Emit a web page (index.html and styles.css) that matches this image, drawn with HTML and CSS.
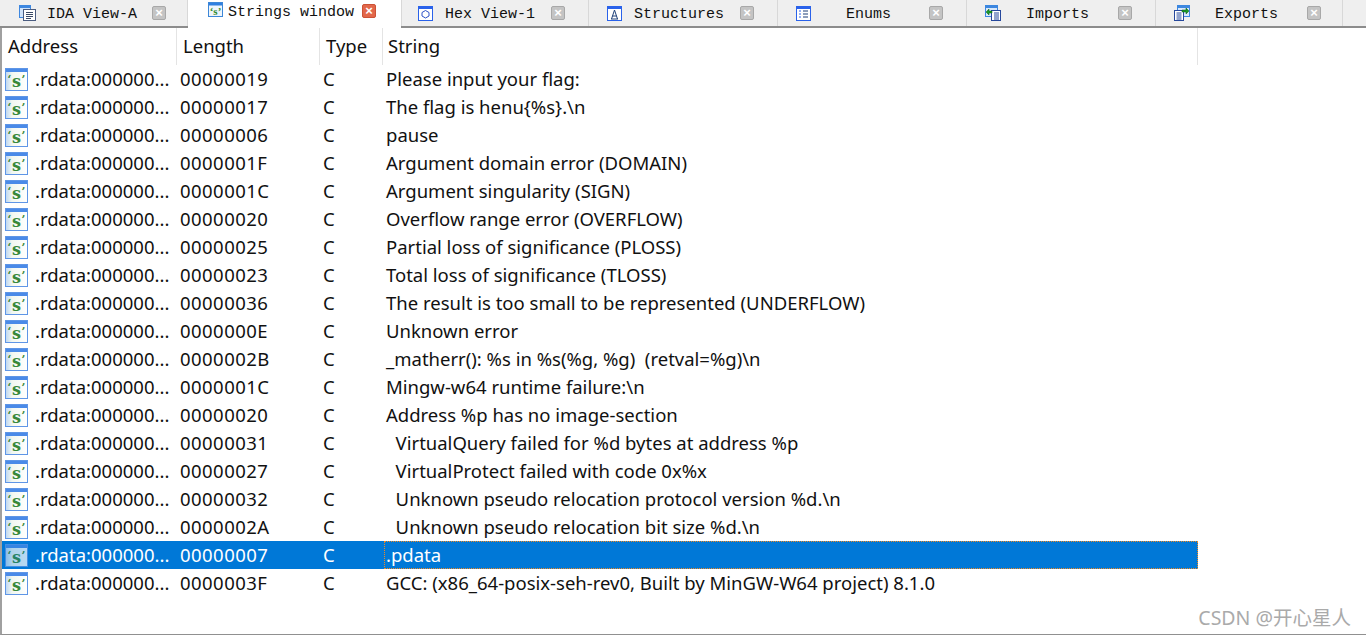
FILE: index.html
```html
<!DOCTYPE html>
<html lang="en">
<head>
<meta charset="utf-8">
<title>Strings window</title>
<link rel="stylesheet" href="styles.css">
</head>
<body>
<svg class="defs" width="0" height="0" aria-hidden="true">
  <defs>
    <linearGradient id="g-str" x1="0" y1="0" x2="1" y2="0">
      <stop offset="0" stop-color="#bcd6f2"/>
      <stop offset="0.3" stop-color="#f2f7f0"/>
      <stop offset="1" stop-color="#ffffff"/>
    </linearGradient>
    <symbol id="i-str" viewBox="0 0 23 23">
      <rect x="0.5" y="0.5" width="22" height="22" fill="url(#g-str)" stroke="#5f96e6"/>
      <rect x="1" y="1" width="21" height="3" fill="#4a8ae8"/>
      <text x="11.5" y="19" class="glyph" text-anchor="middle">s</text>
      <text x="4.5" y="15" class="glyph-q" text-anchor="middle">‘</text>
      <text x="18.5" y="15" class="glyph-q" text-anchor="middle">’</text>
    </symbol>
    <symbol id="i-strsm" viewBox="0 0 15 15">
      <rect x="0.5" y="0.5" width="14" height="14" fill="#eef5fb" stroke="#3d87d8"/>
      <rect x="1" y="1" width="13" height="2.5" fill="#2f7fe0"/>
      <text x="7.5" y="12.5" class="glyph-sm" text-anchor="middle">‘s’</text>
    </symbol>
    <symbol id="i-ida" viewBox="0 0 17 16">
      <rect x="0.5" y="0.5" width="11" height="12" fill="#cfe3fa" stroke="#3d87e0"/>
      <rect x="1" y="0.5" width="10" height="2.5" fill="#3d87e0"/>
      <rect x="4.5" y="4.5" width="12" height="11" fill="#fff" stroke="#4a5c80"/>
      <path d="M7 7.5h7M7 9.5h7M7 11.5h7M7 13.5h5" stroke="#3b4a66" fill="none"/>
    </symbol>
    <symbol id="i-hex" viewBox="0 0 15 15">
      <rect x="0.5" y="0.5" width="14" height="14" fill="#fff" stroke="#2a62ea"/>
      <rect x="1" y="1" width="13" height="2" fill="#2a62ea"/>
      <path d="M7.5 4.5l3.5 2v3.5l-3.5 2-3.5-2v-3.5z" fill="#fff" stroke="#2c50c8"/>
    </symbol>
    <symbol id="i-struct" viewBox="0 0 15 15">
      <rect x="0.5" y="0.5" width="14" height="14" fill="#fff" stroke="#2a62ea"/>
      <rect x="1" y="1" width="13" height="2" fill="#2a62ea"/>
      <path d="M7.5 4L4.5 13M7.5 4l3 9M5.5 10h4M4 13h7" stroke="#1c3f78" fill="none"/>
    </symbol>
    <symbol id="i-enum" viewBox="0 0 15 15">
      <rect x="0.5" y="0.5" width="14" height="14" fill="#fff" stroke="#2a62ea"/>
      <rect x="1" y="1" width="13" height="2" fill="#2a62ea"/>
      <path d="M3 5h2M3 8h2M3 11h2" stroke="#2a62ea" fill="none"/>
      <path d="M7 5h5M7 8h5M7 11h5" stroke="#1c3f78" fill="none"/>
    </symbol>
    <symbol id="i-imp" viewBox="0 0 16 16">
      <rect x="0.5" y="0.5" width="12" height="11" fill="#d8e8fb" stroke="#3d87e0"/>
      <rect x="1" y="0.5" width="11" height="2.5" fill="#3d87e0"/>
      <rect x="6.5" y="5.5" width="9" height="10" fill="#fff" stroke="#26489c"/>
      <path d="M9 8h5M9 10h5M9 12h5M9 14h5" stroke="#26489c" fill="none"/>
      <path d="M1 7l3-3v2h3v2H4v2z" fill="#1c9a28" stroke="#0b5a14" stroke-width="0.5"/>
    </symbol>
    <symbol id="i-exp" viewBox="0 0 16 16">
      <rect x="3.5" y="0.5" width="12" height="11" fill="#d8e8fb" stroke="#3d87e0"/>
      <rect x="4" y="0.5" width="11" height="2.5" fill="#3d87e0"/>
      <rect x="0.5" y="5.5" width="9" height="10" fill="#fff" stroke="#26489c"/>
      <path d="M2.5 8h5M2.5 10h5M2.5 12h5M2.5 14h5" stroke="#26489c" fill="none"/>
      <path d="M15 6l-3-3v2H8v2h4v2z" fill="#1c9a28" stroke="#0b5a14" stroke-width="0.5"/>
    </symbol>
  </defs>
</svg>

<div class="app">
  <nav class="tabs">
    <div class="tab tab-first">
      <svg class="tab-icon icon-ida"><use href="#i-ida"/></svg>
      <span class="tab-label label-near">IDA View-A</span>
      <span class="tab-close">×</span>
    </div>
    <div class="tab tab-active">
      <svg class="tab-icon icon-active"><use href="#i-strsm"/></svg>
      <span class="tab-label label-active">Strings window</span>
      <span class="tab-close close-active">×</span>
    </div>
    <div class="tab tab-hex">
      <svg class="tab-icon icon-box"><use href="#i-hex"/></svg>
      <span class="tab-label label-mid">Hex View-1</span>
      <span class="tab-close">×</span>
    </div>
    <div class="tab">
      <svg class="tab-icon icon-box"><use href="#i-struct"/></svg>
      <span class="tab-label label-mid">Structures</span>
      <span class="tab-close">×</span>
    </div>
    <div class="tab">
      <svg class="tab-icon icon-box"><use href="#i-enum"/></svg>
      <span class="tab-label label-enum">Enums</span>
      <span class="tab-close">×</span>
    </div>
    <div class="tab">
      <svg class="tab-icon icon-box16"><use href="#i-imp"/></svg>
      <span class="tab-label label-far">Imports</span>
      <span class="tab-close">×</span>
    </div>
    <div class="tab tab-last">
      <svg class="tab-icon icon-box16"><use href="#i-exp"/></svg>
      <span class="tab-label label-far">Exports</span>
      <span class="tab-close">×</span>
    </div>
  </nav>

  <main class="panel">
    <div class="row head">
      <div class="cell">Address</div>
      <div class="cell">Length</div>
      <div class="cell">Type</div>
      <div class="cell">String</div>
    </div>
    <div class="row"><div class="addr"><svg class="str-icon"><use href="#i-str"/></svg>.rdata:000000...</div><div>00000019</div><div>C</div><div class="str">Please input your flag:</div></div>
    <div class="row"><div class="addr"><svg class="str-icon"><use href="#i-str"/></svg>.rdata:000000...</div><div>00000017</div><div>C</div><div class="str">The flag is henu{%s}.\n</div></div>
    <div class="row"><div class="addr"><svg class="str-icon"><use href="#i-str"/></svg>.rdata:000000...</div><div>00000006</div><div>C</div><div class="str">pause</div></div>
    <div class="row"><div class="addr"><svg class="str-icon"><use href="#i-str"/></svg>.rdata:000000...</div><div>0000001F</div><div>C</div><div class="str">Argument domain error (DOMAIN)</div></div>
    <div class="row"><div class="addr"><svg class="str-icon"><use href="#i-str"/></svg>.rdata:000000...</div><div>0000001C</div><div>C</div><div class="str">Argument singularity (SIGN)</div></div>
    <div class="row"><div class="addr"><svg class="str-icon"><use href="#i-str"/></svg>.rdata:000000...</div><div>00000020</div><div>C</div><div class="str">Overflow range error (OVERFLOW)</div></div>
    <div class="row"><div class="addr"><svg class="str-icon"><use href="#i-str"/></svg>.rdata:000000...</div><div>00000025</div><div>C</div><div class="str">Partial loss of significance (PLOSS)</div></div>
    <div class="row"><div class="addr"><svg class="str-icon"><use href="#i-str"/></svg>.rdata:000000...</div><div>00000023</div><div>C</div><div class="str">Total loss of significance (TLOSS)</div></div>
    <div class="row"><div class="addr"><svg class="str-icon"><use href="#i-str"/></svg>.rdata:000000...</div><div>00000036</div><div>C</div><div class="str">The result is too small to be represented (UNDERFLOW)</div></div>
    <div class="row"><div class="addr"><svg class="str-icon"><use href="#i-str"/></svg>.rdata:000000...</div><div>0000000E</div><div>C</div><div class="str">Unknown error</div></div>
    <div class="row"><div class="addr"><svg class="str-icon"><use href="#i-str"/></svg>.rdata:000000...</div><div>0000002B</div><div>C</div><div class="str">_matherr(): %s in %s(%g, %g)  (retval=%g)\n</div></div>
    <div class="row"><div class="addr"><svg class="str-icon"><use href="#i-str"/></svg>.rdata:000000...</div><div>0000001C</div><div>C</div><div class="str">Mingw-w64 runtime failure:\n</div></div>
    <div class="row"><div class="addr"><svg class="str-icon"><use href="#i-str"/></svg>.rdata:000000...</div><div>00000020</div><div>C</div><div class="str">Address %p has no image-section</div></div>
    <div class="row"><div class="addr"><svg class="str-icon"><use href="#i-str"/></svg>.rdata:000000...</div><div>00000031</div><div>C</div><div class="str">  VirtualQuery failed for %d bytes at address %p</div></div>
    <div class="row"><div class="addr"><svg class="str-icon"><use href="#i-str"/></svg>.rdata:000000...</div><div>00000027</div><div>C</div><div class="str">  VirtualProtect failed with code 0x%x</div></div>
    <div class="row"><div class="addr"><svg class="str-icon"><use href="#i-str"/></svg>.rdata:000000...</div><div>00000032</div><div>C</div><div class="str">  Unknown pseudo relocation protocol version %d.\n</div></div>
    <div class="row"><div class="addr"><svg class="str-icon"><use href="#i-str"/></svg>.rdata:000000...</div><div>0000002A</div><div>C</div><div class="str">  Unknown pseudo relocation bit size %d.\n</div></div>
    <div class="row selected"><div class="addr"><svg class="str-icon"><use href="#i-str"/></svg>.rdata:000000...</div><div>00000007</div><div>C</div><div class="str">.pdata</div></div>
    <div class="row"><div class="addr"><svg class="str-icon"><use href="#i-str"/></svg>.rdata:000000...</div><div>0000003F</div><div>C</div><div class="str">GCC: (x86_64-posix-seh-rev0, Built by MinGW-W64 project) 8.1.0</div></div>
    <div class="watermark">CSDN @开心星人</div>
  </main>
</div>
</body>
</html>
```

FILE: styles.css
```css
* {
  box-sizing: border-box;
}

html,
body {
  margin: 0;
  height: 636px;
  overflow: hidden;
  background: #ffffff;
}

.defs {
  position: absolute;
}

.app {
  height: 635px;
  display: flex;
  flex-direction: column;
}

.tabs {
  display: flex;
  height: 28px;
  flex: none;
  background: #efefef;
  border-bottom: 2px solid #8c8c8c;
  font: 15px/26px "Liberation Mono", monospace;
  color: #111111;
}

.tab {
  width: 189px;
  height: 26px;
  display: flex;
  align-items: center;
  padding-left: 18px;
  border-right: 1px solid #d8d8d8;
}

.tab-first {
  width: 188px;
  padding-left: 19px;
}

.tab-active {
  width: 213px;
  height: 28px;
  background: #ffffff;
  align-items: flex-start;
  padding-left: 20px;
  border-right: 0;
  margin-bottom: -2px;
}

.tab-hex {
  width: 188px;
  padding-left: 16px;
  border-left: 1px solid #d8d8d8;
}

.tab-last {
  width: 187px;
}

.tab-icon {
  flex: none;
}

.icon-ida {
  width: 17px;
  height: 16px;
}

.icon-active {
  width: 15px;
  height: 15px;
  margin-top: 2px;
}

.icon-box {
  width: 15px;
  height: 15px;
}

.icon-box16 {
  width: 16px;
  height: 16px;
}

.tab-label {
  white-space: pre;
  padding-top: 3px;
}

.label-near {
  width: 113px;
  padding-left: 11px;
}

.label-mid {
  width: 115px;
  padding-left: 12px;
}

.label-active {
  width: 134px;
  padding-left: 5px;
  padding-top: 0;
  line-height: 25px;
}

.label-enum {
  width: 115px;
  padding-left: 35px;
}

.label-far {
  width: 114px;
  padding-left: 25px;
}

.tab-close {
  width: 14px;
  height: 14px;
  margin-left: 3px;
  flex: none;
  background: #c4c4c4;
  border: 1px solid #a8a8a8;
  border-radius: 2px;
  color: #ffffff;
  font: bold 13px/11px "Liberation Sans", sans-serif;
  text-align: center;
}

.close-active {
  margin-top: 4px;
  margin-left: 5px;
  background: #e2674a;
  border-color: #cc5236;
}

.panel {
  position: relative;
  flex: 1;
  border-left: 2px solid #a0a0a0;
  border-bottom: 1px solid #909090;
  font: 18.5px/28px "Noto Sans", "Open Sans", sans-serif;
  color: #111111;
}

.row {
  display: grid;
  grid-template-columns: 175px 143px 63px 815px;
  width: 1196px;
  height: 28px;
  white-space: pre;
}

.row > div:nth-child(n + 2) {
  padding-left: 3px;
}

.row > div:nth-child(2) {
  letter-spacing: 0.45px;
}

.row > div.str {
  margin-left: 1px;
  padding-left: 1px;
  border: 1px solid transparent;
  line-height: 26px;
}

.head {
  height: 37px;
  line-height: 36px;
  background: #ffffff;
}

.head .cell {
  border-right: 1px solid #e4e4e4;
  padding-left: 6px;
}

.head > .cell:nth-child(n + 2) {
  padding-left: 6px;
  letter-spacing: 0;
}

.head > .cell:last-child {
  padding-left: 5px;
}

.addr {
  display: flex;
  align-items: center;
  overflow: hidden;
}

.str-icon {
  width: 23px;
  height: 23px;
  flex: none;
  margin: 0 7px 0 3px;
}

.glyph {
  font: bold 16px "DejaVu Serif", serif;
  fill: #38883a;
}

.glyph-q {
  font: bold 11px "DejaVu Serif", serif;
  fill: #38883a;
}

.glyph-sm {
  font: bold 11px "Liberation Serif", serif;
  fill: #2f8a2f;
}

.selected {
  background: #0078d7;
  color: #ffffff;
}

.selected .str-icon {
  opacity: 0.72;
}

.row.selected > div.str {
  border: 1px dotted #f08a24;
}

.watermark {
  position: absolute;
  right: 15px;
  bottom: 4px;
  font: 19.5px/24px "Noto Sans", "Noto Sans CJK SC", sans-serif;
  color: #aaaaaa;
}
```
